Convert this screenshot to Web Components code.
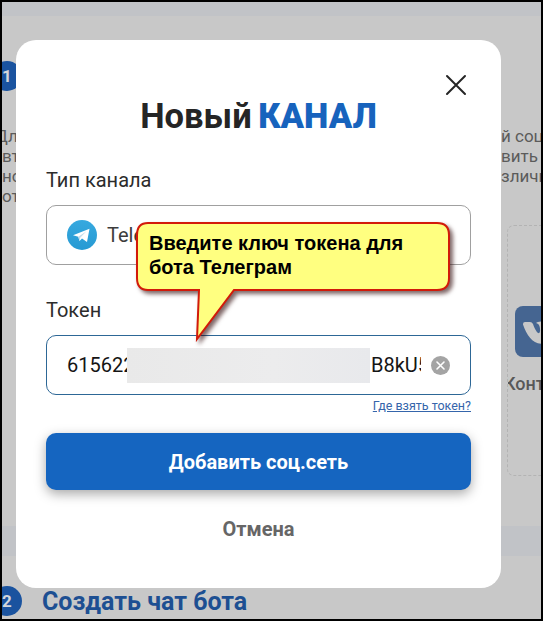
<!DOCTYPE html>
<html lang="ru">
<head>
<meta charset="utf-8">
<title>Новый канал</title>
<style>
  html, body { margin: 0; height: 100%; }
  body { background: #000; font-family: Roboto, "Liberation Sans", sans-serif; overflow: hidden; }
</style>
</head>
<body>
<app-window>
  <step-section number="1">
    <intro-text></intro-text>
    <social-card label="Контакт"></social-card>
  </step-section>
  <step-section number="2" heading="Создать чат бота"></step-section>
  <channel-dialog slot="overlay">
    <field-box slot="fields" label="Тип канала">
      <channel-option>Telegram</channel-option>
    </field-box>
    <field-box slot="fields" label="Токен" active>
      <token-value start="615622" end="B8kU5"></token-value>
    </field-box>
  </channel-dialog>
  <hint-callout slot="overlay">Введите ключ токена для<br>бота Телеграм</hint-callout>
</app-window>

<script>
class BaseElement extends HTMLElement {
  constructor() {
    super();
    this.attachShadow({ mode: 'open' });
  }

  connectedCallback() {
    this.shadowRoot.innerHTML = this.template();
  }

  attr(name) {
    return this.getAttribute(name) || '';
  }
}

class AppWindow extends BaseElement {
  template() {
    return `
      <style>
        :host {
          display: block;
          position: relative;
          box-sizing: border-box;
          width: 543px;
          height: 621px;
          border: 2px solid #000;
          overflow: hidden;
          background: #c1c3c7;
        }
        .page {
          display: flex;
          flex-direction: column;
          gap: 30px;
          padding-top: 14px;
        }
      </style>
      <div class="page"><slot></slot></div>
      <slot name="overlay"></slot>
    `;
  }
}

class StepSection extends BaseElement {
  template() {
    return `
      <style>
        :host {
          display: block;
          box-sizing: border-box;
          height: 510px;
          padding-top: 45px;
          background: #c8c8c8;
        }
        :host([heading]) { height: 70px; padding-top: 30px; }
        header {
          display: flex;
          align-items: center;
          gap: 20px;
          height: 30px;
          margin-left: -10px;
        }
        .number {
          flex: none;
          width: 30px;
          height: 30px;
          border-radius: 50%;
          background: #1a539f;
          color: #d3d6da;
          font-size: 17px;
          font-weight: 700;
          line-height: 30px;
          text-align: center;
        }
        h2 {
          margin: 0;
          color: #1d4f92;
          font-size: 25px;
          font-weight: 700;
          line-height: 32px;
          padding-top: 2px;
          white-space: nowrap;
        }
      </style>
      <header>
        <span class="number">${this.attr('number')}</span>
        ${this.attr('heading') ? `<h2>${this.attr('heading')}</h2>` : ''}
      </header>
      <slot></slot>
    `;
  }
}

class IntroText extends BaseElement {
  template() {
    return `
      <style>
        :host {
          display: block;
          padding-top: 35px;
          color: #5b5b5b;
          font-size: 17px;
          line-height: 20px;
        }
        .row {
          display: grid;
          grid-template-columns: 14px 40px;
          justify-content: space-between;
          height: 20px;
          white-space: nowrap;
        }
        .row span { overflow: hidden; }
        .first { text-indent: -7px; }
      </style>
      <div class="row"><span class="first">Дл</span><span>й соц</span></div>
      <div class="row"><span>вт</span><span>вить</span></div>
      <div class="row"><span>но</span><span>зличн</span></div>
      <div class="row"><span>от</span></div>
    `;
  }
}

class SocialCard extends BaseElement {
  template() {
    return `
      <style>
        :host {
          display: flex;
          flex-direction: column;
          box-sizing: border-box;
          width: 66px;
          height: 251px;
          margin: 19px 0 0 505px;
          padding: 80px 0 0 7px;
          border: 1px dashed #b3b3b3;
          border-radius: 7px;
          overflow: hidden;
        }
        svg { flex: none; display: block; }
        .label {
          margin: 16px 0 0 -11px;
          color: #585858;
          font-size: 18px;
          font-weight: 500;
          line-height: 22px;
          white-space: nowrap;
        }
      </style>
      <svg width="51" height="51" viewBox="0 0 51 51">
        <rect width="51" height="51" rx="8" fill="#456591"/>
        <path d="M8 18q0-2 2-2h5q2 0 3 2c2 6 5 10 6 9 2-1 1-8-1-9-1-1-2-1-2-1 1-1 3-1.500 6-1.500 4 0 4 1 4 4v6c1 2 5-4 7-8q1-2 3-2h5c2 0 2 1 1 3-2 4-7 8-7 10s8 8 7 9c-1 2-7 1-9 0-2-2-5-5-6-4s-.5 4-2 4c-11 2-18-7-22-19z" fill="#c8c8c8"/>
      </svg>
      <span class="label">${this.attr('label')}</span>
    `;
  }
}

class ChannelDialog extends BaseElement {
  template() {
    return `
      <style>
        :host {
          position: absolute;
          left: 14px;
          top: 38px;
          display: flex;
          flex-direction: column;
          box-sizing: border-box;
          width: 485px;
          height: 548px;
          padding: 34px 30px 0;
          border-radius: 20px;
          background: #fff;
        }
        .close { align-self: flex-end; margin-right: 4px; width: 22px; height: 22px; }
        h1 {
          margin: 0 0 32px;
          color: #252525;
          font-size: 34.500px;
          font-weight: 700;
          line-height: 40px;
          text-align: center;
          white-space: nowrap;
          word-spacing: -2px;
        }
        h1 b { color: #1763bd; }
        .fields { display: flex; flex-direction: column; gap: 33px; }
        .help {
          align-self: flex-end;
          margin-top: 3px;
          color: #3565ab;
          font-size: 12.500px;
          line-height: 16px;
          text-decoration: underline;
        }
        button {
          padding: 0;
          border: 0;
          font: 700 20px/24px Roboto, "Liberation Sans", sans-serif;
        }
        .submit {
          height: 57px;
          margin-top: 19px;
          border-radius: 10px;
          background: #1565c0;
          box-shadow: 0 4px 12px rgba(0, 0, 0, .34);
          color: #fff;
        }
        .cancel { margin-top: 27px; background: none; color: #666; }
      </style>
      <svg class="close" viewBox="0 0 22 22" fill="none" stroke="#252525" stroke-width="2" stroke-linecap="round">
        <path d="M2 2l18 18M20 2L2 20"/>
      </svg>
      <h1>Новый <b>КАНАЛ</b></h1>
      <div class="fields"><slot name="fields"></slot></div>
      <a class="help">Где взять токен?</a>
      <button class="submit">Добавить соц.сеть</button>
      <button class="cancel">Отмена</button>
    `;
  }
}

class FieldBox extends BaseElement {
  template() {
    return `
      <style>
        :host { display: block; }
        label {
          display: block;
          margin-bottom: 13px;
          color: #2c2c2c;
          font-size: 20px;
          line-height: 24px;
        }
        .box {
          display: flex;
          align-items: center;
          box-sizing: border-box;
          height: 60px;
          padding: 0 20px;
          border: 1px solid #a0a0a0;
          border-radius: 10px;
          font-size: 20px;
        }
        :host([active]) .box { border-color: #2d6796; }
      </style>
      <label>${this.attr('label')}</label>
      <div class="box"><slot></slot></div>
    `;
  }
}

class ChannelOption extends BaseElement {
  template() {
    return `
      <style>
        :host { display: flex; align-items: center; gap: 10px; color: #3c3c3c; }
      </style>
      <svg width="30" height="30" viewBox="0 0 30 30">
        <defs>
          <linearGradient id="sky" x1="0" y1="0" x2="0" y2="1">
            <stop offset="0" stop-color="#37a9df"/>
            <stop offset="1" stop-color="#269ad3"/>
          </linearGradient>
        </defs>
        <circle cx="15" cy="15" r="15" fill="url(#sky)"/>
        <path d="M6 15.300L22.500 8.700L20 22L15 18.500L12.500 21L11.300 16.800z" fill="#fff"/>
        <path d="M11.300 16.800L19.500 11.200L13.200 17.800L12.500 21z" fill="#c2dceb"/>
      </svg>
      <span><slot></slot></span>
    `;
  }
}

class TokenValue extends BaseElement {
  template() {
    return `
      <style>
        :host { display: flex; align-items: center; width: 100%; color: #151515; }
        span { flex: none; overflow: hidden; white-space: nowrap; line-height: 24px; }
        .start { width: 60px; }
        .mask {
          flex: none;
          width: 243px;
          height: 35px;
          background: linear-gradient(90deg, #e9e9e9, #ececed 60%, #e8e9ec);
        }
        .end { width: 50px; margin-left: 1px; }
        svg { flex: none; margin-left: 10px; }
      </style>
      <span class="start">${this.attr('start')}</span>
      <i class="mask"></i>
      <span class="end">${this.attr('end')}</span>
      <svg width="19" height="19" viewBox="0 0 19 19">
        <circle cx="9.500" cy="9.500" r="9.500" fill="#a4a4a4"/>
        <path d="M6 6l7 7M13 6l-7 7" stroke="#fff" stroke-width="1.600" stroke-linecap="round"/>
      </svg>
    `;
  }
}

class HintCallout extends BaseElement {
  template() {
    return `
      <style>
        :host {
          position: absolute;
          left: 134px;
          top: 220px;
          display: block;
          box-sizing: border-box;
          width: 314px;
          padding: 9px 0 0 13px;
          color: #000;
          font: 700 20px/24px "Liberation Sans", sans-serif;
          white-space: nowrap;
        }
        svg {
          position: absolute;
          left: 0;
          top: 0;
          overflow: visible;
          filter: drop-shadow(3px 3px 2px rgba(40, 0, 0, .6));
        }
        .text { position: relative; }
      </style>
      <svg width="314" height="120" viewBox="0 0 314 120">
        <path d="M12 1H301Q313 1 313 13V56Q313 68 301 68H98L61 117L63 68H12Q1 68 1 56V13Q1 1 12 1z"
          fill="#ffff80" stroke="#d21a0a" stroke-width="2"/>
      </svg>
      <div class="text"><slot></slot></div>
    `;
  }
}

customElements.define('app-window', AppWindow);
customElements.define('step-section', StepSection);
customElements.define('intro-text', IntroText);
customElements.define('social-card', SocialCard);
customElements.define('channel-dialog', ChannelDialog);
customElements.define('field-box', FieldBox);
customElements.define('channel-option', ChannelOption);
customElements.define('token-value', TokenValue);
customElements.define('hint-callout', HintCallout);
</script>
</body>
</html>
